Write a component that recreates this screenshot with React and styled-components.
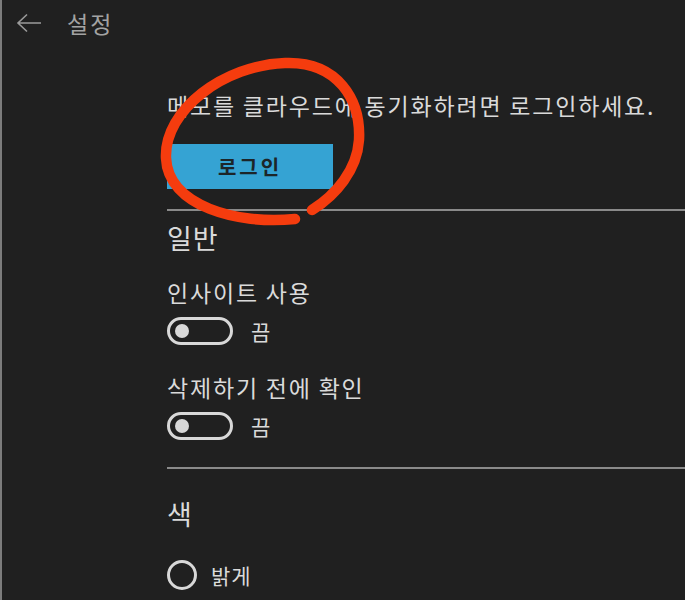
import React from "react";
import styled, { createGlobalStyle } from "styled-components";

const GlobalStyle = createGlobalStyle`
  html, body {
    margin: 0;
    padding: 0;
    background: #202020;
  }
  body {
    font-family: "Noto Sans CJK KR", "Noto Sans", sans-serif;
  }
`;

const Page = styled.div`
  position: relative;
  width: 685px;
  height: 600px;
  overflow: hidden;
  box-sizing: border-box;
  background: #202020;
  border-left: 2px solid #7c7c7c;
  color: #dadada;
`;

const Header = styled.header`
  display: flex;
  align-items: center;
  height: 46px;
  padding-left: 14px;
  gap: 25px;
`;

const BackButton = styled.button`
  display: flex;
  align-items: center;
  padding: 0;
  border: 0;
  background: none;
  cursor: pointer;
`;

const Title = styled.h1`
  margin: 0;
  font-size: 23px;
  font-weight: 400;
  letter-spacing: 2px;
  line-height: 30px;
  color: #a3a3a3;
`;

const Content = styled.main`
  display: flex;
  flex-direction: column;
  align-items: flex-start;
  padding-left: 165px;
`;

const Text = styled.p`
  margin: ${(p) => p.$top || 0}px 0 0;
  font-size: 23px;
  letter-spacing: 1.8px;
  line-height: 30px;
  white-space: nowrap;
`;

const Heading = styled.h2`
  margin: ${(p) => p.$top || 0}px 0 0;
  font-size: 27px;
  font-weight: 400;
  letter-spacing: 1px;
  line-height: 34px;
`;

const LoginButton = styled.button`
  margin-top: 24px;
  width: 166px;
  height: 45px;
  border: 0;
  background: #35a3d3;
  color: #1c2529;
  font-family: inherit;
  font-size: 20px;
  font-weight: 700;
  letter-spacing: 3px;
  cursor: pointer;
`;

const Divider = styled.hr`
  align-self: stretch;
  margin: ${(p) => p.$top}px 0 0;
  height: 2px;
  border: 0;
  background: #8a8a8a;
`;

const ToggleRow = styled.label`
  display: flex;
  align-items: center;
  gap: 18px;
  margin-top: 10px;
  font-size: 21px;
  line-height: 28px;
`;

const Track = styled.span`
  box-sizing: border-box;
  display: flex;
  align-items: center;
  width: 66px;
  height: 28px;
  padding-left: 5px;
  border: 3px solid #d8d8d8;
  border-radius: 14px;
`;

const Knob = styled.span`
  width: 14px;
  height: 14px;
  border-radius: 50%;
  background: #d8d8d8;
`;

const RadioRow = styled.label`
  display: flex;
  align-items: center;
  gap: 14px;
  margin-top: 29px;
  font-size: 21px;
  letter-spacing: 1px;
  line-height: 30px;
`;

const RadioCircle = styled.span`
  box-sizing: border-box;
  width: 30px;
  height: 30px;
  border: 3px solid #d8d8d8;
  border-radius: 50%;
`;

const Scribble = styled.svg`
  position: absolute;
  left: 0;
  top: 0;
  pointer-events: none;
`;

function Toggle({ label }) {
  return (
    <ToggleRow>
      <Track>
        <Knob />
      </Track>
      {label}
    </ToggleRow>
  );
}

export default function App() {
  return (
    <>
      <GlobalStyle />
      <Page>
        <Header>
          <BackButton aria-label="뒤로">
            <svg width="26" height="20" viewBox="0 0 26 20" fill="none">
              <path
                d="M25 10H2M11 1.5L2 10l9 8.5"
                stroke="#9a9a9a"
                strokeWidth="1.6"
              />
            </svg>
          </BackButton>
          <Title>설정</Title>
        </Header>

        <Content>
          <Text $top={44}>메모를 클라우드에 동기화하려면 로그인하세요.</Text>
          <LoginButton>로그인</LoginButton>
          <Divider $top={20} />

          <Heading $top={10}>일반</Heading>
          <Text $top={22}>인사이트 사용</Text>
          <Toggle label="끔" />
          <Text $top={27}>삭제하기 전에 확인</Text>
          <Toggle label="끔" />
          <Divider $top={27} />

          <Heading $top={28}>색</Heading>
          <RadioRow>
            <RadioCircle />
            밝게
          </RadioRow>
        </Content>

        <Scribble width="685" height="600" viewBox="0 0 685 600">
          <path
            d="M293 219 C235 225 166 206 164 158 C162 110 222 65 283 63 C336 61 359 100 357 140 C355 170 334 195 310 210"
            fill="none"
            stroke="#f53c0e"
            strokeWidth="10.5"
            strokeLinecap="round"
          />
        </Scribble>
      </Page>
    </>
  );
}
